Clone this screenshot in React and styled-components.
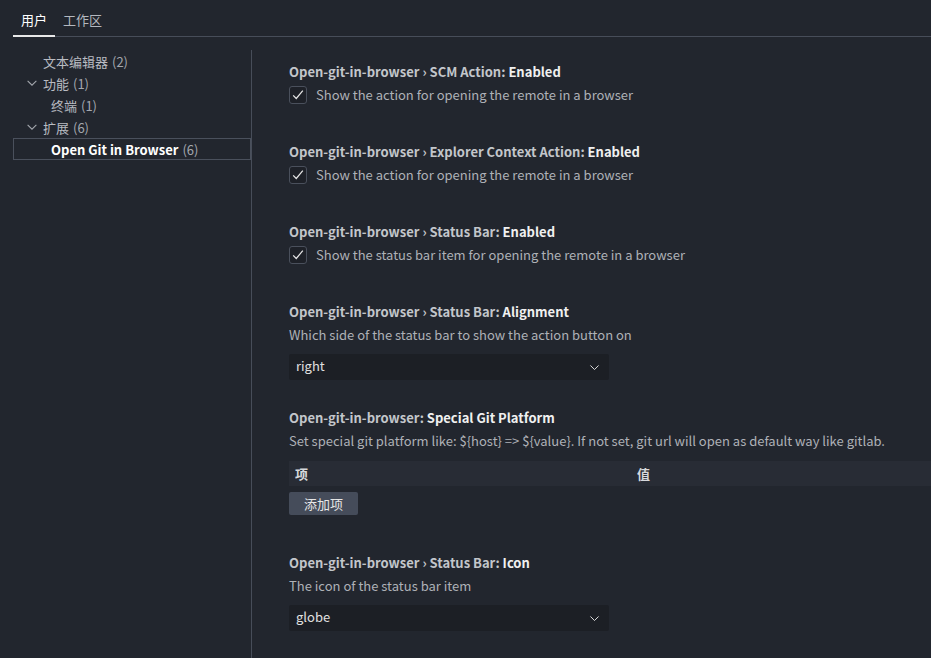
import React from "react";
import styled, { createGlobalStyle } from "styled-components";

const GlobalStyle = createGlobalStyle`
  html, body {
    margin: 0;
    padding: 0;
    background: #22262e;
    overflow: hidden;
  }
  body {
    font-family: "Noto Sans CJK SC", "Noto Sans", sans-serif;
    font-size: 13px;
    color: #b9bcc2;
  }
`;

const Page = styled.div`
  width: 931px;
  height: 658px;
  display: flex;
  flex-direction: column;
  overflow: hidden;
`;

const TabBar = styled.div`
  display: flex;
  height: 36px;
  margin-left: 13px;
  border-bottom: 1px solid #474d59;
`;

const Tab = styled.div`
  padding: 0 8px;
  display: flex;
  align-items: center;
  padding-top: 3px;
  box-sizing: border-box;
  color: ${(p) => (p.active ? "#ffffff" : "#b4b8bf")};
  border-bottom: 2px solid ${(p) => (p.active ? "#e8e8e8" : "transparent")};
  margin-bottom: -1px;
`;

const Body = styled.div`
  flex: 1;
  display: flex;
  min-height: 0;
`;

const Sidebar = styled.div`
  width: 238px;
  margin-left: 13px;
  padding-top: 13px;
`;

const TreeRow = styled.div`
  height: 22px;
  box-sizing: border-box;
  display: flex;
  align-items: center;
  padding-left: ${(p) => p.indent}px;
  border: 1px solid ${(p) => (p.selected ? "#4a505c" : "transparent")};
  color: ${(p) => (p.selected ? "#ffffff" : "#b9bcc2")};
  font-weight: ${(p) => (p.selected ? 600 : 400)};
`;

const Count = styled.span`
  color: #a4a8ae;
  font-weight: 400;
  margin-left: 4px;
`;

const Twistie = styled.span`
  width: 16px;
  display: flex;
  align-items: center;
  justify-content: flex-start;
  color: #a4a8ae;

  svg {
    margin-left: -2px;
  }
`;

const Main = styled.div`
  flex: 1;
  border-left: 1px solid #474d59;
  margin-top: 13px;
  padding: 2px 0 0 37px;
  overflow: hidden;
`;

const Setting = styled.div`
  padding: 10px 0 18px;
`;

const Title = styled.div`
  line-height: 20px;
  font-weight: 600;
  color: #c3c6cb;
  white-space: nowrap;

  b {
    color: #f0f0f0;
    font-weight: 700;
  }
`;

const Desc = styled.div`
  margin-top: 3px;
  line-height: 20px;
  color: #aeb1b7;
  white-space: nowrap;
`;

const CheckRow = styled.div`
  display: flex;
  align-items: center;
  gap: 9px;
  margin-top: 2px;
  margin-bottom: 10px;
  height: 20px;
  color: #aeb1b7;
`;

const CheckBox = styled.span`
  width: 18px;
  height: 18px;
  box-sizing: border-box;
  border: 1px solid #4a505c;
  border-radius: 3px;
  background: #1e2128;
  display: flex;
  align-items: center;
  justify-content: center;
  margin-top: 1px;
`;

const Select = styled.div`
  margin-top: 9px;
  width: 320px;
  height: 26px;
  box-sizing: border-box;
  background: #1c1f25;
  border-radius: 2px;
  display: flex;
  align-items: center;
  justify-content: space-between;
  padding: 0 8px 3px 7px;
  color: #e0e0e0;

  svg {
    margin-top: 3px;
  }
`;

const Table = styled.div`
  margin-top: 10px;
  width: 684px;
  height: 25px;
  background: #282c35;
  display: grid;
  grid-template-columns: 1fr 1fr;
  align-items: center;
`;

const HeadCell = styled.div`
  padding-left: 6px;
  font-weight: 700;
  color: #d6d8dc;
`;

const AddButton = styled.button`
  margin-top: 6px;
  margin-bottom: 10px;
  height: 23px;
  width: 69px;
  border: none;
  border-radius: 2px;
  background: #454c5a;
  color: #e6e6e6;
  font: inherit;
  padding: 0;
`;

const Chevron = ({ size = 10 }) => (
  <svg width={size} height={size} viewBox="0 0 16 16" fill="none">
    <path d="M3 5.5l5 5 5-5" stroke="currentColor" strokeWidth="1.2" />
  </svg>
);

const Check = () => (
  <svg width="14" height="14" viewBox="0 0 16 16" fill="none">
    <path d="M2.5 8.5l3.5 3.5 7.5-9" stroke="#e6e6e6" strokeWidth="1.4" />
  </svg>
);

const CheckSetting = ({ prefix, name, text }) => (
  <Setting>
    <Title>
      {prefix} <b>{name}</b>
    </Title>
    <CheckRow>
      <CheckBox>
        <Check />
      </CheckBox>
      {text}
    </CheckRow>
  </Setting>
);

const SelectSetting = ({ prefix, name, text, value }) => (
  <Setting>
    <Title>
      {prefix} <b>{name}</b>
    </Title>
    <Desc>{text}</Desc>
    <Select>
      {value}
      <Chevron size={13} />
    </Select>
  </Setting>
);

export default function App() {
  return (
    <Page>
      <GlobalStyle />
      <TabBar>
        <Tab active>用户</Tab>
        <Tab>工作区</Tab>
      </TabBar>
      <Body>
        <Sidebar>
          <TreeRow indent={29}>
            文本编辑器<Count>(2)</Count>
          </TreeRow>
          <TreeRow indent={13}>
            <Twistie>
              <Chevron size={14} />
            </Twistie>
            功能<Count>(1)</Count>
          </TreeRow>
          <TreeRow indent={37}>
            终端<Count>(1)</Count>
          </TreeRow>
          <TreeRow indent={13}>
            <Twistie>
              <Chevron size={14} />
            </Twistie>
            扩展<Count>(6)</Count>
          </TreeRow>
          <TreeRow indent={37} selected>
            Open Git in Browser<Count>(6)</Count>
          </TreeRow>
        </Sidebar>
        <Main>
          <CheckSetting
            prefix="Open-git-in-browser › SCM Action:"
            name="Enabled"
            text="Show the action for opening the remote in a browser"
          />
          <CheckSetting
            prefix="Open-git-in-browser › Explorer Context Action:"
            name="Enabled"
            text="Show the action for opening the remote in a browser"
          />
          <CheckSetting
            prefix="Open-git-in-browser › Status Bar:"
            name="Enabled"
            text="Show the status bar item for opening the remote in a browser"
          />
          <SelectSetting
            prefix="Open-git-in-browser › Status Bar:"
            name="Alignment"
            text="Which side of the status bar to show the action button on"
            value="right"
          />
          <Setting>
            <Title>
              Open-git-in-browser: <b>Special Git Platform</b>
            </Title>
            <Desc>
              {"Set special git platform like: ${host} => ${value}. If not set, git url will open as default way like gitlab."}
            </Desc>
            <Table>
              <HeadCell>项</HeadCell>
              <HeadCell>值</HeadCell>
            </Table>
            <AddButton>添加项</AddButton>
          </Setting>
          <SelectSetting
            prefix="Open-git-in-browser › Status Bar:"
            name="Icon"
            text="The icon of the status bar item"
            value="globe"
          />
        </Main>
      </Body>
    </Page>
  );
}
